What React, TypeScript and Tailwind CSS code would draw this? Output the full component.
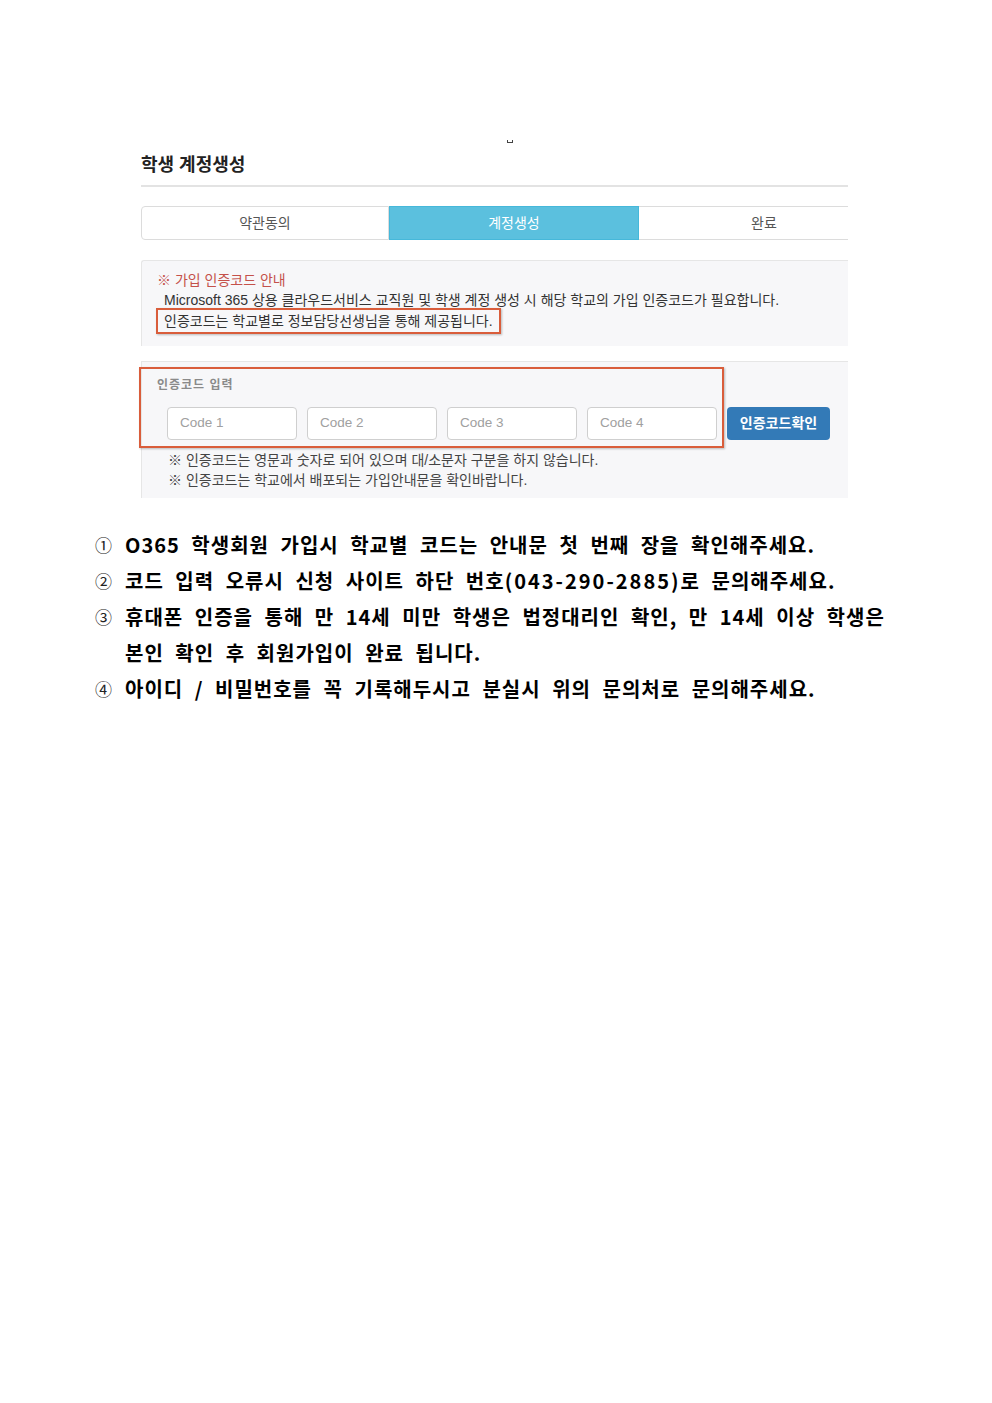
import React from 'react';

const ui = "font-['Liberation_Sans','Noto_Sans_CJK_KR',sans-serif]";
const doc = "font-['Noto_Sans_CJK_KR',sans-serif]";

const steps = ['약관동의', '계정생성', '완료'];

const items: { n: string; lines: React.ReactNode[] }[] = [
  { n: '①', lines: ['O365 학생회원 가입시 학교별 코드는 안내문 첫 번째 장을 확인해주세요.'] },
  {
    n: '②',
    lines: [
      <>
        코드 입력 오류시 신청 사이트 하단 번호<span className="tracking-[2px]">(043-290-2885)</span>로 문의해주세요.
      </>,
    ],
  },
  {
    n: '③',
    lines: [
      '휴대폰 인증을 통해 만 14세 미만 학생은 법정대리인 확인, 만 14세 이상 학생은',
      '본인 확인 후 회원가입이 완료 됩니다.',
    ],
  },
  { n: '④', lines: ['아이디 / 비밀번호를 꼭 기록해두시고 분실시 위의 문의처로 문의해주세요.'] },
];

export default function App() {
  return (
    <div className="w-[992px] min-h-[1403px] bg-white">
      <div className={`ml-[141px] w-[707px] pt-[140px] ${ui}`}>
        <div className="ml-[366px] w-[6px] h-[3px] border-b border-l border-r border-[#444]" />

        <h1 className="mt-[10px] h-[24px] leading-[24px] text-[18px] font-bold text-[#222]">학생 계정생성</h1>
        <div className="mt-[8px] h-[2px] bg-[#e3e3e3]" />

        <div className="mt-[19px] flex h-[34px] text-[14px] overflow-hidden">
          <div className="w-[248px] shrink-0 flex items-center justify-center border border-[#dcdcdc] rounded-l-[4px] text-[#555]">
            {steps[0]}
          </div>
          <div className="w-[250px] shrink-0 flex items-center justify-center bg-[#5bc0de] border border-[#46b8da] text-white">
            {steps[1]}
          </div>
          <div className="w-[250px] shrink-0 flex items-center justify-center border-t border-b border-[#dcdcdc] text-[#555]">
            {steps[2]}
          </div>
        </div>

        <div className="mt-[20px] h-[86px] bg-[#f7f7f9] border-t border-l border-[#e6e6e6] rounded-tl-[3px] pt-[9px] text-[14px] leading-[20px]">
          <div className="pl-[15px] text-[#c4514a]">※ 가입 인증코드 안내</div>
          <div className="pl-[22px] text-[#333]">
            Microsoft 365 상용 클라우드서비스 교직원 및 학생 계정 생성 시 해당 학교의 가입 인증코드가 필요합니다.
          </div>
          <div className="pl-[14px] -mt-[2px]">
            <span className="inline-block h-[26px] leading-[22px] border-2 border-[#d95d3b] px-[6px] text-[#333] shadow-[1px_1px_2px_rgba(0,0,0,0.25)]">
              인증코드는 학교별로 정보담당선생님을 통해 제공됩니다.
            </span>
          </div>
        </div>

        <div className="mt-[15px] h-[137px] bg-[#f7f7f9] border-t border-l border-[#e6e6e6] pt-[5px]">
          <div className="flex items-end">
            <div className="-ml-[3px] w-[585px] border-2 border-[#d95d3b] pt-[8px] pb-[6px] shadow-[1px_1px_2px_rgba(0,0,0,0.25)]">
              <div className="pl-[16px] h-[16px] leading-[16px] text-[12px] tracking-[1px] font-bold text-[#8a8a8a]">
                인증코드 입력
              </div>
              <div className="mt-[14px] pl-[26px] flex gap-[10px]">
                {['Code 1', 'Code 2', 'Code 3', 'Code 4'].map((c) => (
                  <div
                    key={c}
                    className="w-[130px] h-[33px] flex items-center pl-[12px] bg-white border border-[#cfcfcf] rounded-[4px] text-[13.5px] text-[#a0a0a0]"
                  >
                    {c}
                  </div>
                ))}
              </div>
            </div>
            <button className="ml-[3px] mb-[8px] w-[103px] h-[33px] rounded-[4px] bg-[#337ab7] text-white text-[14px] font-semibold">
              인증코드확인
            </button>
          </div>
          <div className="mt-[2px] pl-[26px] text-[14px] leading-[20px] text-[#444]">
            <div>※ 인증코드는 영문과 숫자로 되어 있으며 대/소문자 구분을 하지 않습니다.</div>
            <div>※ 인증코드는 학교에서 배포되는 가입안내문을 확인바랍니다.</div>
          </div>
        </div>
      </div>

      <div className={`ml-[95px] mt-[29px] ${doc} text-black`}>
        {items.map((it) => (
          <div key={it.n} className="flex">
            <span className="w-[30px] h-[36px] leading-[36px] text-[17px] text-[#222]">{it.n}</span>
            <div>
              {it.lines.map((l, i) => (
                <div
                  key={i}
                  className="h-[36px] leading-[36px] text-[20px] font-bold tracking-[1px] [word-spacing:6px]"
                >
                  {l}
                </div>
              ))}
            </div>
          </div>
        ))}
      </div>
    </div>
  );
}
